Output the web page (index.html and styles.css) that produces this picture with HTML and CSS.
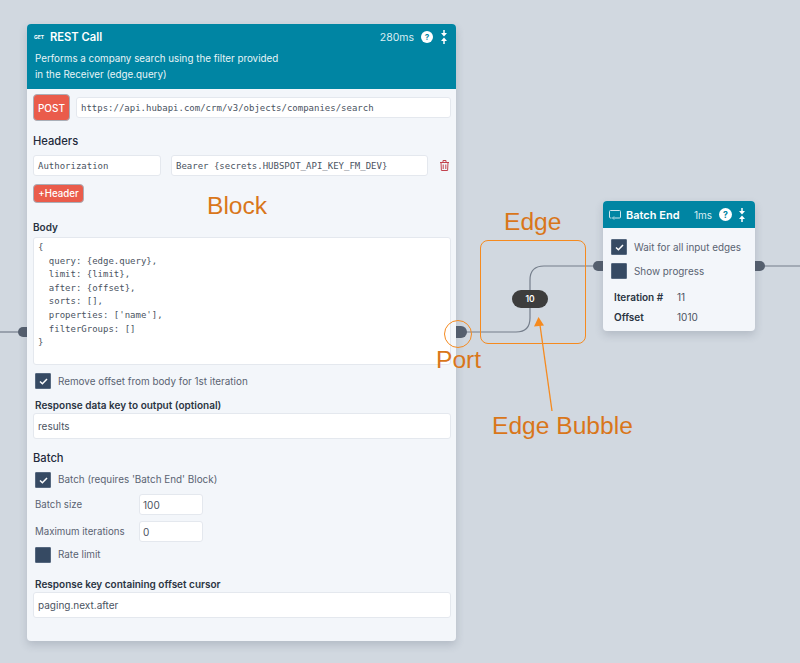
FILE: index.html
```html
<!DOCTYPE html>
<html lang="en">
<head>
<meta charset="utf-8">
<title>REST Call</title>
<link rel="stylesheet" href="styles.css">
</head>
<body>
<main class="canvas">
  <svg class="edges" width="800" height="663" viewBox="0 0 800 663" fill="none">
    <path class="edge" d="M0 332H20"/>
    <path class="edge" d="M466 332H516Q530 332 530 318V280Q530 266 544 266H596"/>
    <path class="edge" d="M762 266H800"/>
    <path class="port" d="M27 327H23a5 5 0 0 0 0 10h4z"/>
    <path class="port" d="M456 326h5a6 6 0 0 1 0 12h-5z"/>
    <path class="port" d="M603 261h-5a5 5 0 0 0 0 10h5z"/>
    <path class="port" d="M755 261h5a5 5 0 0 1 0 10h-5z"/>
  </svg>

  <section class="node rest">
    <header class="head rest-head">
      <div class="title-row">
        <span class="get">GET</span>
        <h2 class="title">REST Call</h2>
        <span class="time rest-time">280ms</span>
        <svg class="help" width="12" height="12" viewBox="0 0 14 14"><circle cx="7" cy="7" r="7" fill="#fff"/><text x="7" y="10.500" text-anchor="middle" class="help-q">?</text></svg>
        <svg class="collapse" width="8" height="14" viewBox="0 0 8 14"><path d="M4 0v3" stroke="#fff" stroke-width="1.500"/><path d="M1 3h6L4 6.500z" fill="#fff"/><path d="M4 14v-3" stroke="#fff" stroke-width="1.500"/><path d="M1 11h6L4 7.500z" fill="#fff"/></svg>
      </div>
      <p class="desc">Performs a company search using the filter provided<br>in the Receiver (edge.query)</p>
    </header>
    <div class="rest-body">
      <div class="url-row">
        <button class="btn post">POST</button>
        <div class="field mono url">https://api.hubapi.com/crm/v3/objects/companies/search</div>
      </div>
      <h3 class="section headers-title">Headers</h3>
      <div class="header-row">
        <div class="field mono h-key">Authorization</div>
        <div class="field mono h-val">Bearer {secrets.HUBSPOT_API_KEY_FM_DEV}</div>
        <svg class="trash" width="9" height="11" viewBox="0 0 9 11" fill="none" stroke="#c2424e" stroke-width="1"><path d="M0 2.500h9M3 2.500V.5h3v2M1 2.500l.4 8h6.200l.4-8M3.200 4.500v4.500M5.800 4.500v4.500"/></svg>
      </div>
      <button class="btn add">+Header</button>
      <label class="label body-label">Body</label>
      <pre class="field mono code">{
  query: {edge.query},
  limit: {limit},
  after: {offset},
  sorts: [],
  properties: ['name'],
  filterGroups: []
}</pre>
      <div class="check-row first-check"><span class="box on"><svg width="9" height="7" viewBox="0 0 9 7" fill="none"><path d="M1 3.500 3.400 5.800 8 1" stroke="#fff" stroke-width="1.500"/></svg></span><span>Remove offset from body for 1st iteration</span></div>
      <label class="label key-label">Response data key to output (optional)</label>
      <div class="field tall">results</div>
      <h3 class="section batch-title">Batch</h3>
      <div class="check-row batch-check"><span class="box on"><svg width="9" height="7" viewBox="0 0 9 7" fill="none"><path d="M1 3.500 3.400 5.800 8 1" stroke="#fff" stroke-width="1.500"/></svg></span><span class="lifted">Batch (requires 'Batch End' Block)</span></div>
      <div class="num-row size-row"><span class="num-label">Batch size</span><div class="field num">100</div></div>
      <div class="num-row iter-row"><span class="num-label">Maximum iterations</span><div class="field num">0</div></div>
      <div class="check-row rate-check"><span class="box"></span><span class="lifted">Rate limit</span></div>
      <label class="label cursor-label">Response key containing offset cursor</label>
      <div class="field tall">paging.next.after</div>
    </div>
  </section>

  <section class="node batch">
    <header class="head batch-head">
      <svg width="12" height="10" viewBox="0 0 12 10" fill="none" stroke="#cfe6ee" stroke-width="1"><path d="M2.500 8H1.500a1 1 0 0 1-1-1V1.500a1 1 0 0 1 1-1h9a1 1 0 0 1 1 1V7a1 1 0 0 1-1 1H4.500M5 6.500 3.500 8 5 9.500"/></svg>
      <h2 class="title batch-name">Batch End</h2>
      <span class="time batch-time">1ms</span>
      <svg class="help" width="13" height="13" viewBox="0 0 14 14"><circle cx="7" cy="7" r="7" fill="#fff"/><text x="7" y="10.500" text-anchor="middle" class="help-q">?</text></svg>
      <svg class="collapse" width="8" height="14" viewBox="0 0 8 14"><path d="M4 0v3" stroke="#fff" stroke-width="1.500"/><path d="M1 3h6L4 6.500z" fill="#fff"/><path d="M4 14v-3" stroke="#fff" stroke-width="1.500"/><path d="M1 11h6L4 7.500z" fill="#fff"/></svg>
    </header>
    <div class="batch-body">
      <div class="check-row batch-line"><span class="box on"><svg width="9" height="7" viewBox="0 0 9 7" fill="none"><path d="M1 3.500 3.400 5.800 8 1" stroke="#fff" stroke-width="1.500"/></svg></span><span>Wait for all input edges</span></div>
      <div class="check-row batch-line"><span class="box"></span><span>Show progress</span></div>
      <dl class="stats">
        <dt>Iteration #</dt><dd>11</dd>
        <dt>Offset</dt><dd>1010</dd>
      </dl>
    </div>
  </section>

  <span class="bubble">10</span>
  <div class="mark edge-box"></div>
  <div class="mark port-ring"></div>
  <svg class="arrow" width="30" height="94" viewBox="0 0 30 94" fill="none"><path d="M23 94 11 8" stroke="#f58a1f" stroke-width="1.300"/><path d="M9.500 0 5 9.500 15 8.500z" fill="#f58a1f"/></svg>
  <span class="note n-block">Block</span>
  <span class="note n-edge">Edge</span>
  <span class="note n-port">Port</span>
  <span class="note n-bubble">Edge Bubble</span>
</main>
</body>
</html>
```

FILE: styles.css
```css
* { box-sizing: border-box; }
html, body { margin: 0; height: 100%; }
body { background: #d1d8e0; font-family: Inter, "Liberation Sans", sans-serif; color: #1f2a3a; overflow: hidden; }
h2, h3, p, pre, dl, dd { margin: 0; }
.canvas { position: relative; width: 800px; height: 663px; }
.edges { position: absolute; inset: 0; }
.edge { stroke: #747d8a; stroke-width: 1.200; }
.port { fill: #56606f; }

.node { position: absolute; background: #f3f6fa; border-radius: 4px; box-shadow: 0 4px 8px rgba(60, 70, 90, .2); overflow: hidden; }
.rest { left: 27px; top: 24px; width: 429px; height: 617px; }
.batch { left: 603px; top: 201px; width: 152px; height: 130px; }

.head { background: #0085a3; color: #fff; }
.rest-head { height: 65px; padding: 5px 8px; }
.title-row { display: flex; align-items: center; height: 18px; margin-top: -1px; }
.get { font-size: 5px; font-weight: 700; width: 16px; margin-left: -1px; }
.title { font-size: 11.200px; font-weight: 600; }
.time { font-size: 10.500px; color: #dbeef3; }
.rest-time { margin-left: auto; margin-right: 7px; }
.help-q { font: 700 9.500px Inter, sans-serif; fill: #0085a3; }
.collapse { margin-left: 7px; }
.desc { font-size: 9.800px; line-height: 15.500px; color: #e8f4f7; margin-top: 5px; }

.rest-body { padding: 5px 5px 0 6px; }
.url-row { display: flex; align-items: center; gap: 6px; height: 27px; }
.btn { border: 1px solid #a9afb8; border-radius: 4px; background: #ea5c4b; color: #fff; font: 500 10px Inter, sans-serif; padding: 0; }
.post { width: 37px; height: 27px; }
.add { display: block; width: 51px; height: 19px; margin-top: 8px; font-size: 9.700px; }
.field { background: #fff; border: 1px solid #e4e8ee; border-radius: 3px; color: #4a5361; font-size: 10px; display: flex; align-items: center; padding: 0 4px; }
.mono { font-family: "DejaVu Sans Mono", "Liberation Mono", monospace; font-size: 9px; }
.url { flex: 1; height: 21px; }
.section { font-size: 11.200px; font-weight: 500; line-height: 14px; }
.headers-title { margin-top: 13px; }
.header-row { display: flex; align-items: center; height: 21px; margin-top: 7px; }
.h-key { width: 128px; height: 21px; }
.h-val { width: 257px; height: 21px; margin-left: 10px; }
.trash { margin-left: 12px; }
.label { display: block; font-size: 10px; font-weight: 600; line-height: 10px; color: #2a3442; }
.body-label { margin-top: 19px; }
.code { display: block; height: 128px; padding: 3px 4px; margin-top: 5px; line-height: 13.600px; white-space: pre; }
.check-row { display: flex; align-items: center; font-size: 9.900px; color: #5a6372; }
.lifted { margin-top: -2px; }
.box { display: flex; align-items: center; justify-content: center; flex: none; width: 16px; height: 16px; background: #364a63; border: 1px solid #56687f; border-radius: 1px; }
.first-check { margin: 8px 0 0 2px; gap: 7px; }
.key-label { margin-top: 11px; padding-left: 2px; }
.tall { height: 26px; margin-top: 3px; }
.batch-title { margin-top: 12px; }
.batch-check { margin: 7px 0 0 2px; gap: 7px; }
.num-row { display: flex; align-items: center; height: 21px; font-size: 9.700px; color: #5a6372; padding-left: 2px; }
.size-row { margin-top: 6px; }
.iter-row { margin-top: 6px; }
.num-label { width: 104px; }
.num { width: 64px; height: 21px; padding: 0 3px; }
.rate-check { margin: 5px 0 0 2px; gap: 7px; }
.cursor-label { margin-top: 16px; padding-left: 2px; }

.batch-head { display: flex; align-items: center; height: 27px; padding: 0 9px 0 6px; }
.batch-name { font-size: 11px; margin-left: 5px; }
.batch-time { font-size: 10px; margin-left: auto; margin-right: 7px; }
.batch-head .collapse { margin-left: 6px; }
.batch-body { padding: 11px 8px 0; }
.batch-line { gap: 7px; height: 16px; margin-bottom: 8px; }
.stats { display: grid; grid-template-columns: 63px 1fr; row-gap: 8px; font-size: 10px; line-height: 12px; margin: 12px 0 0 3px; }
.stats dt { font-weight: 600; color: #2a3442; }
.stats dd { color: #4a5361; }

.bubble { position: absolute; left: 512px; top: 290px; width: 36px; height: 18px; border-radius: 9px; background: #3d3d3d; color: #fff; font-size: 8.500px; font-weight: 600; display: flex; align-items: center; justify-content: center; }
.mark { position: absolute; border: 1.500px solid #f58a1f; }
.edge-box { left: 480px; top: 240px; width: 106px; height: 104px; border-radius: 8px; }
.port-ring { left: 444px; top: 320px; width: 28px; height: 28px; border-radius: 50%; }
.arrow { position: absolute; left: 529px; top: 317px; }
.note { position: absolute; font-family: "Liberation Sans", sans-serif; font-size: 24.600px; line-height: 28px; color: #d9761a; }
.n-block { left: 207px; top: 192px; }
.n-edge { left: 504px; top: 208px; }
.n-port { left: 436px; top: 346px; }
.n-bubble { left: 492px; top: 412px; }
```
